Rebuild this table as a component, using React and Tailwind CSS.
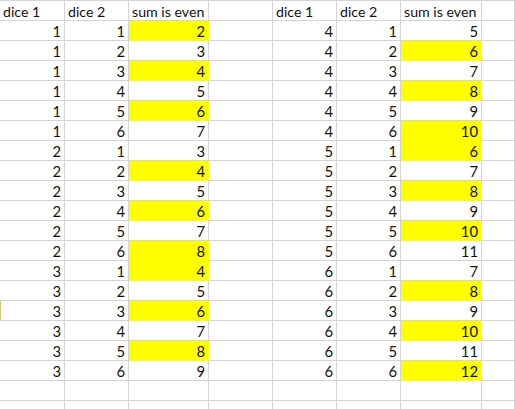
const left = []
const right = []
for (let a = 1; a <= 3; a++) for (let b = 1; b <= 6; b++) left.push([a, b])
for (let a = 4; a <= 6; a++) for (let b = 1; b <= 6; b++) right.push([a, b])

const widths = 'grid-cols-[65px_64px_80px_64px_64px_64px_81px_1fr]'
const line = 'border-r border-b border-[#d4d4d4]'

const Cell = ({ children, right: alignRight, yellow, className = '' }) => (
  <div
    className={`h-[20px] flex items-center whitespace-nowrap pt-[2px] ${line} ${
      alignRight ? 'justify-end pr-[3px]' : 'pl-[3px]'
    } ${yellow ? 'bg-[#ffff00] border-[#ffff00]' : ''} ${className}`}
  >
    {children}
  </div>
)

const App = () => {
  const headers = ['dice 1', 'dice 2', 'sum is even', '', 'dice 1', 'dice 2', 'sum is even', '']
  return (
    <div
      className="w-[515px] h-[409px] overflow-hidden bg-white text-[#111] text-[14.8px]"
      style={{ fontFamily: 'Lato, "Open Sans", sans-serif' }}
    >
      <div className={`grid ${widths} border-t border-[#d4d4d4]`}>
        {headers.map((h, i) => (
          <Cell key={i} className="text-[14.2px]">{h}</Cell>
        ))}
        {left.map(([a, b], i) => {
          const [c, d] = right[i]
          return [
            <Cell key={`a${i}`} right className={i === 14 ? 'shadow-[inset_1px_0_0_#d9c27a]' : ''}>{a}</Cell>,
            <Cell key={`b${i}`} right>{b}</Cell>,
            <Cell key={`s${i}`} right yellow={(a + b) % 2 === 0}>{a + b}</Cell>,
            <Cell key={`e${i}`} />,
            <Cell key={`c${i}`} right>{c}</Cell>,
            <Cell key={`d${i}`} right>{d}</Cell>,
            <Cell key={`t${i}`} right yellow={(c + d) % 2 === 0}>{c + d}</Cell>,
            <Cell key={`f${i}`} />,
          ]
        })}
        {Array.from({ length: 16 }).map((_, i) => (
          <Cell key={`x${i}`} />
        ))}
      </div>
    </div>
  )
}

export default App
